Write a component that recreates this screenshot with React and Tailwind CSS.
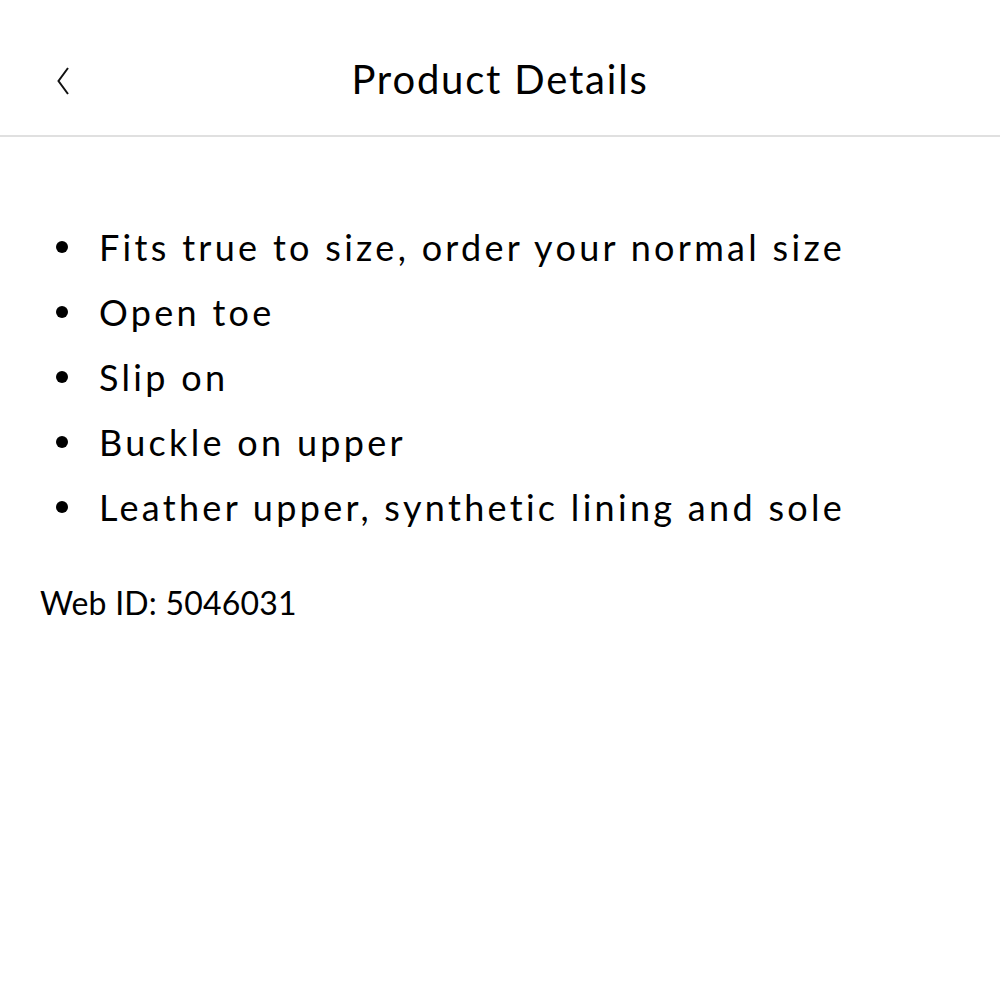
import React from 'react';

const items = [
  'Fits true to size, order your normal size',
  'Open toe',
  'Slip on',
  'Buckle on upper',
  'Leather upper, synthetic lining and sole',
];

const App = () => {
  return (
    <div className="w-[1000px] h-[1000px] bg-white text-black" style={{ fontFamily: 'Lato, "Noto Sans", sans-serif' }}>
      {/* Header */}
      <div className="relative h-[137px] flex items-center justify-center border-b-2 border-[#e0e0e0]">
        <button className="absolute left-[50px] top-[66px] w-[26px] h-[30px] flex items-center justify-center">
          <svg width="18" height="28" viewBox="0 0 18 28" fill="none" stroke="#111" strokeWidth="2">
            <path d="M14 1 L4.5 14 L14 27" />
          </svg>
        </button>
        <h1 className="text-[40px] font-normal leading-none tracking-[1.8px] mt-[22px]">Product Details</h1>
      </div>

      {/* Bullet list */}
      <ul className="pt-[77px] pl-[56px] pr-6">
        {items.map((t) => (
          <li key={t} className="flex items-center h-[65px]">
            <span className="w-[12px] h-[12px] rounded-full bg-black shrink-0 mr-[31px]" />
            <span className="text-[36px] tracking-[3.3px] leading-none">{t}</span>
          </li>
        ))}
      </ul>

      <div className="pl-[40px] pt-[48px] text-[32px] tracking-[0.2px] leading-none">Web ID: 5046031</div>
    </div>
  );
};

export default App;
